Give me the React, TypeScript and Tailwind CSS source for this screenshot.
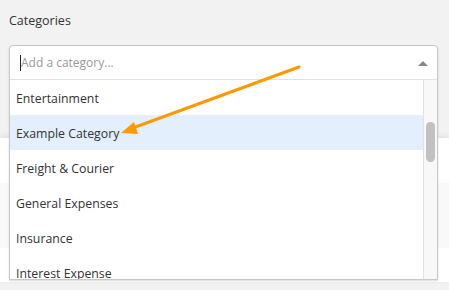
import React from 'react'

const items = [
  'Entertainment',
  'Example Category',
  'Freight & Courier',
  'General Expenses',
  'Insurance',
  'Interest Expense',
]

export default function App() {
  return (
    <div
      className="relative w-[449px] h-[290px] overflow-hidden bg-[#f2f2f2] text-[#333]"
      style={{ fontFamily: '"Open Sans", "Liberation Sans", sans-serif' }}
    >
      {/* page underneath */}
      <div className="h-[138px] px-[9px] pt-[12px]">
        <div className="text-[12.5px] leading-[18px]">Categories</div>
      </div>
      <div className="h-[144px] bg-white shadow-[0_-2px_6px_rgba(0,0,0,0.08)] flex flex-col">
        <div className="h-[45px]" />
        <div className="h-[65px] bg-[#f9f9f9]" />
      </div>

      {/* dropdown */}
      <div className="absolute left-[9px] top-[45px] w-[429px] h-[235px] bg-white border border-[#c8c8c8] rounded-t-[4px] shadow-[0_1px_2px_rgba(0,0,0,0.15)] flex flex-col overflow-hidden">
        <div className="h-[34px] shrink-0 flex items-center justify-between pl-[10px] pr-[9px] pt-[1px] border-b border-[#e2e2e2]">
          <div className="flex items-center">
            <span className="w-px h-[16px] bg-[#222]" />
            <span className="text-[12px] text-[#999]">Add a category...</span>
          </div>
          <span className="w-0 h-0 border-l-[5px] border-r-[5px] border-b-[5px] border-l-transparent border-r-transparent border-b-[#888]" />
        </div>
        <div className="flex flex-1 min-h-0">
          <div className="flex-1 flex flex-col">
            {items.map((item, i) => (
              <div
                key={item}
                className={`h-[35px] shrink-0 flex items-center pl-[6px] pt-[3px] leading-[18px] text-[12.3px] ${i === 1 ? 'bg-[#e3effd]' : ''}`}
              >
                {item}
              </div>
            ))}
          </div>
          <div className="w-[14px] shrink-0 bg-[#f8f8f8] border-l border-[#e2e2e2] pt-[42px] flex justify-center">
            <div className="w-[9px] h-[40px] rounded-full bg-[#c1c1c1]" />
          </div>
        </div>
      </div>

      {/* annotation arrow */}
      <svg className="absolute left-0 top-0" width="449" height="290">
        <line x1="299" y1="67" x2="130" y2="129" stroke="#ff9900" strokeWidth="3" strokeLinecap="round" />
        <polygon points="121,133 134,122 138,134" fill="#ff9900" />
      </svg>
    </div>
  )
}
